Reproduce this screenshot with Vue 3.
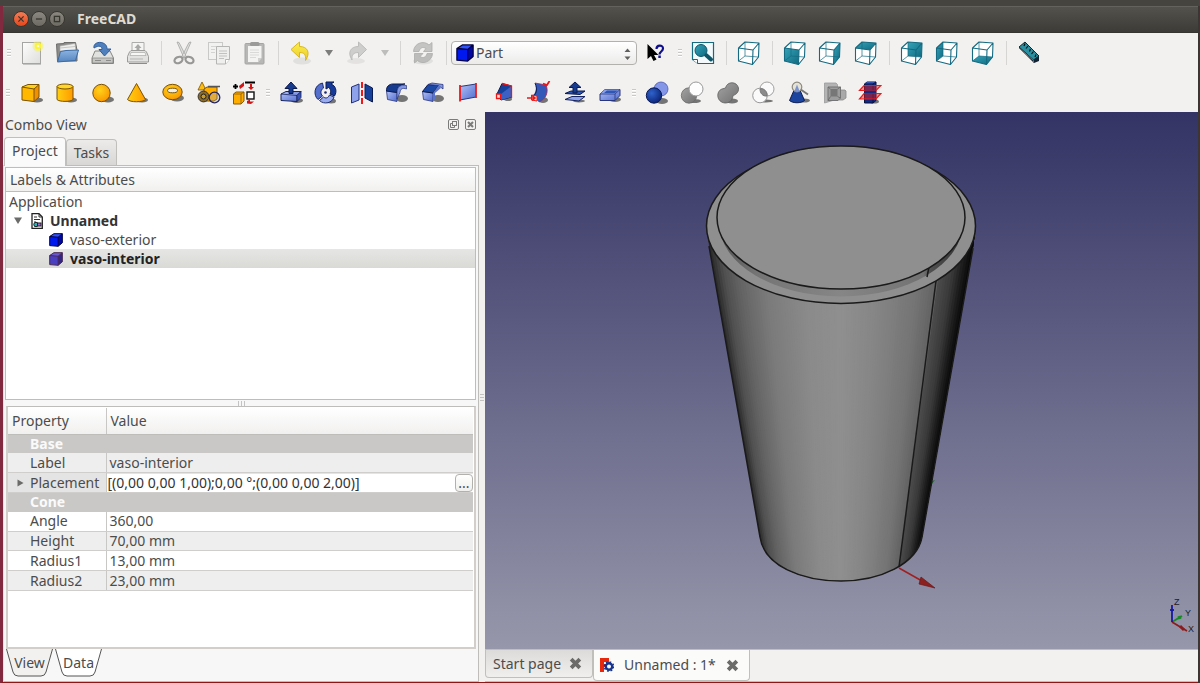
<script setup>
import { ref } from 'vue'

const teal = '#146a80'
const cubeFaces = {
  front: '1.5,7 16,9 15.5,23.5 1.5,20',
  right: '16,9 22,2 21.5,16 15.5,23.5',
  top: '1.5,7 8,1 22,2 16,9',
  rear: '8,1 22,2 21.5,16 8,15',
  left: '1.5,7 8,1 8,15 1.5,20',
  bottom: '1.5,20 15.5,23.5 21.5,16 8,15',
}
function cube(face) {
  const fill = face ? `<polygon points="${cubeFaces[face]}" fill="url(#gTeal)"/>` : ''
  return `<polygon points="1.5,7 8,1 22,2 21.5,16 15.5,23.5 1.5,20" fill="#fff"/>${fill}
  <g fill="none" stroke="${teal}" stroke-linejoin="round"><path d="M8 1V15L1.5 20M8 15L21.5 16" stroke-width=".7"/>
  <path d="M1.5 7L16 9L15.5 23.5L1.5 20ZM1.5 7L8 1L22 2L16 9M22 2L21.5 16L15.5 23.5" stroke-width="1.1"/></g>`
}
const shadow = (x, y, rx, ry) => `<ellipse cx="${x}" cy="${y}" rx="${rx}" ry="${ry}" fill="#222" opacity=".6"/>`
const blueCube = `<path d="M3 7L9 3L21 3L21 16L15 21L3 20Z" fill="#0018f0"/><path d="M15 8L21 3V16L15 21Z" fill="#0008a8"/><path d="M3 7L9 3H21L15 8Z" fill="#2f52ff"/><path d="M3 7L9 3H21V16L15 21L3 20ZM3 7L15 8V21M15 8L21 3" fill="none" stroke="#000040" stroke-width="1.4" stroke-linejoin="round"/>`

const icons = {
  blueCube,
  fadedCube: blueCube.replace('#0018f0', '#4a3fc0').replace('#0008a8', '#33268a').replace('#2f52ff', '#6a5ad0').replace('#000040', '#4a2a50'),
  new: `<rect x="2.500" y="1.500" width="18" height="21" fill="url(#gPaper)" stroke="#a5a5a3"/><path d="M3 23.500H21" stroke="#c4c4c2"/><circle cx="18" cy="5" r="5.500" fill="#f7f25a" opacity=".55"/><circle cx="18" cy="5" r="3.200" fill="#fbf335"/><circle cx="18" cy="5" r="1.300" fill="#fffde0"/>`,
  open: `<path d="M1.500 3L9 2.500V1.500H20.500L22 9V20H2.500Z" fill="#8c8c8a" stroke="#6e6e6c"/><path d="M5 5L20 2.500L21 10H5Z" fill="#efefee" stroke="#a8a8a6" stroke-width=".6"/><path d="M5 7L20 5.500" stroke="#c6c6c4"/><path d="M5.500 10.500L11 9.500L23.500 9L20.500 19.500L2.500 21Z" fill="url(#gFolder)" stroke="#3d6ba3"/>`,
  save: `<path d="M4 10H19L22.500 17V22.500H1V17Z" fill="#e1e1df" stroke="#858583"/><path d="M1.500 17H22V22H1.500Z" fill="#c5c5c3" stroke="#858583" stroke-width=".7"/><path d="M4 19.500H10M15 19.500H20" stroke="#8c8c8a" stroke-width="1.200"/><path d="M3 7C2 3 7 0 12 2C16 3.500 16 7 16 8H20L13.500 15L8 8.500H11C11 5 8 4 3 7Z" fill="#4f80bd" stroke="#2f5f9c"/>`,
  print: `<path d="M6 1.500H18V13H6Z" fill="#f5f5f4" stroke="#acacaa"/><path d="M12 3L15.500 7H13.500V11H10.500V7H8.500Z" fill="#a8a8a6"/><path d="M3.500 11L5 9.500H19L20.500 11L22.500 15.500V21H1.500V15.500Z" fill="#e2e2e0" stroke="#9b9b99"/><path d="M5 11.500H19L20 14.500H4Z" fill="#f7f7f6" stroke="#a9a9a7" stroke-width=".7"/><path d="M4 18H17" stroke="#b5b5b3"/><path d="M3 22.500H21" stroke="#8b8b89"/>`,
  cut: `<path d="M5 1L7 1.500L14.500 16L12 17ZM19 1L17 1.500L9.500 16L12 17Z" fill="#dededc" stroke="#a6a6a4" stroke-width=".8"/><ellipse cx="6.500" cy="19" rx="4.200" ry="3" fill="none" stroke="#979795" stroke-width="2.200" transform="rotate(-25 6.500 19)"/><ellipse cx="17.500" cy="19" rx="4.200" ry="3" fill="none" stroke="#979795" stroke-width="2.200" transform="rotate(25 17.500 19)"/>`,
  copy: `<rect x="1.500" y="1.500" width="14" height="17" fill="#f2f2f1" stroke="#c9c9c7"/><path d="M4 5.500H12M4 8.500H8M4 11.500H8" stroke="#d3d3d1"/><path d="M9.500 5.500H22.500V18.500L18.500 23H9.500Z" fill="#efefee" stroke="#b5b5b3"/><path d="M12 10H20M12 12.500H20M12 15H20M12 17.500H17" stroke="#c1c1bf"/><path d="M22.500 18.500H18.500V23" fill="#fff" stroke="#b5b5b3"/>`,
  paste: `<rect x="2" y="2.500" width="19" height="20.500" rx="1" fill="#b7b7b5" stroke="#a5a5a3"/><path d="M5 5H18.500V17L15 21H5Z" fill="#f3f3f2"/><path d="M7 9H16M7 11.500H16M7 14H16M7 16.500H13" stroke="#d9d9d7"/><path d="M15 21V17H18.500Z" fill="#cfcfcd"/><rect x="7" y="1" width="9.500" height="4" rx="1.500" fill="#9a9a98"/>`,
  undo: `<ellipse cx="13" cy="20" rx="9" ry="3.500" fill="#000" opacity=".07"/><path d="M2 8.500L10.500 1V5.500C19 5.500 21.500 12 16.500 19.500C17 13.500 15.500 11.500 10.500 11.500V16.500Z" fill="url(#gUndo)" stroke="#d9b81a" stroke-linejoin="round"/>`,
  redo: `<ellipse cx="11" cy="20" rx="9" ry="3" fill="#000" opacity=".06"/><path d="M21.500 8.500L13.500 1V5.500C5 5.500 2.500 12 7 19C6.500 13.500 8.500 11.500 13.500 11.500V16.500Z" fill="#cececc" stroke="#bcbcba" stroke-linejoin="round"/>`,
  refresh: `<ellipse cx="12" cy="20" rx="10" ry="3.500" fill="#000" opacity=".07"/><path d="M2.500 10.500C3 2 13 -1 18 4L21 1.500V10.500H12.500L15 7.500C12 5.500 9 6.500 8 10.500Z" fill="#c4c4c2" stroke="#acacaa" stroke-width=".8"/><path d="M21.500 12.500C21 21 11 24 6.500 19.500L3.500 22V12.500H12L9 15.500C12 17.500 15 16.500 16 12.500Z" fill="#bcbcba" stroke="#acacaa" stroke-width=".8"/>`,
  help: `<path d="M3.500 3V18L7 15L9.500 20L12.500 18.500L10 14H14.500Z" fill="#000"/><path d="M12.500 8C12.500 3.500 19 3.500 19 7.500C19 10.500 15.500 10.500 15.500 13.500" fill="none" stroke="#10108a" stroke-width="2.200"/><rect x="14.300" y="14.500" width="2.500" height="2.500" fill="#10108a"/>`,
  fit: `<path d="M1.500 1.500H22.500V22.500H7L1.500 18.500Z" fill="#f4fafb" stroke="${teal}" stroke-width="1.200"/><path d="M1.500 18.500H6.500V22.500" fill="#fff" stroke="${teal}"/><path d="M15 14L20 18.500" stroke="#0e5568" stroke-width="4" stroke-linecap="round"/><circle cx="10" cy="9.500" r="6" fill="url(#gTeal)" stroke="#0e5568"/>`,
  iso: cube(''), front: cube('front'), right: cube('right'), top: cube('top'), rear: cube('rear'), left: cube('left'), bottom: cube('bottom'),
  measure: `<path d="M2 7L17 22L22 20V15L8 2Z" fill="#123"/><path d="M2 6L8 1L22 15L16.500 19Z" fill="#2a8fa0" stroke="#0c2b33"/><path d="M8 2.500L7 5M11 5L9 7.500M13.500 8L12.500 10.500M16.500 10.500L14.500 13M19 13.500L18 16" stroke="#04151a" stroke-width="1.200"/><path d="M2 7L16.500 19.500V22" fill="none" stroke="#777"/>`,

  box: shadow(18, 19, 6, 2.5) + `<path d="M3 6L9 3.500H20V16L15 20.500L3 19Z" fill="#ffb700"/><path d="M15 8L20 3.500V16L15 20.500Z" fill="#f09000"/><path d="M3 6L9 3.500H20L15 8Z" fill="#ffd21a"/><path d="M3 6L9 3.500H20V16L15 20.500L3 19ZM3 6L15 8V20.500M15 8L20 3.500" fill="none" stroke="#7a5200" stroke-linejoin="round"/>`,
  cylinder: shadow(17, 19, 6, 2.5) + `<path d="M3 5.500V18.500C5 21 17 21 19 18.500V5.500Z" fill="url(#gGold)" stroke="#7a5200"/><ellipse cx="11" cy="5.500" rx="8" ry="2.500" fill="#ffd62a" stroke="#7a5200"/>`,
  sphere: shadow(18, 18.500, 6, 3) + `<circle cx="11.500" cy="12" r="8.700" fill="url(#gGoldR)" stroke="#7a5200"/>`,
  cone: shadow(17, 19, 6, 2.5) + `<path d="M11.500 2.500L2.500 18.500C5 21.500 18 21.500 20.500 18.500Z" fill="url(#gGold)" stroke="#7a5200" stroke-linejoin="round"/>`,
  torus: shadow(16, 17, 7, 3.500) + `<ellipse cx="11.500" cy="11" rx="9.700" ry="7.700" fill="url(#gGoldR)" stroke="#7a5200"/><ellipse cx="11.500" cy="9.500" rx="5" ry="2.300" fill="#f1f0ef" stroke="#7a5200"/>`,
  primitives: `<path d="M5 1L1 9H9Z" fill="#ffbd10" stroke="#7a5200" stroke-width=".8"/><path d="M7 8L10 6H20V18L17 20H7Z" fill="#ffae00" stroke="#7a5200"/><path d="M11 5.500H23" stroke="#555" stroke-width="1.500"/><circle cx="6.500" cy="15.500" r="5.400" fill="#8a6a24" stroke="#333"/><circle cx="6.500" cy="15.500" r="2.500" fill="#c99a28" stroke="#222"/><circle cx="17.500" cy="16.500" r="5.300" fill="#aaa" fill-opacity=".35" stroke="#26265c" stroke-width="1.300"/>`,
  builder: `<path d="M1 5.500H6M3.500 3V8M13 1.500H23" stroke="#000" stroke-width="1.800"/><path d="M7 5L12 1V5L8 8ZM18 3H20V6H22L19 9L16 6H18Z" fill="#d51414"/><path d="M1.500 13L4 11H12V20L9 23H1.500Z" fill="#ffac00" stroke="#8a5a00"/><path d="M1.500 13H9V23M9 13L12 11" fill="none" stroke="#8a5a00" stroke-width=".8"/><rect x="15" y="11" width="7" height="7" fill="#fff" stroke="#111" stroke-width="1.400"/><path d="M15 20L18 18.500V20.500H22L19 23L15 22.500Z" fill="#d51414"/>`,
  extrude: shadow(18, 19.500, 6, 2.5) + `<path d="M2 13L7 10.500H22L18 14.500V20.500L2 19.500Z" fill="url(#gBlue)" stroke="#16235c"/><path d="M2 13L18 14.500L22 10.500V16.500L18 20.500V14.500" fill="#3854b8" stroke="#16235c" stroke-width=".8"/><path d="M10 12.500V7.500H6L12 1L18 7.500H14V12.500Z" fill="#163a8e" stroke="#0a1a50"/>`,
  revolve: shadow(17, 20, 5, 2.5) + `<path d="M8.500 2C0 4 -1 14 4 18.500L8.500 15C6 12.500 6.500 9 9.500 7Z" fill="#5470cc" stroke="#1a2a70"/><path d="M5.500 19.500C10 24 18.500 22 20 16L15.500 14C14 17.500 11.500 17.500 9.500 16Z" fill="#9aabee" stroke="#1a2a70"/><path d="M20.500 15C23.500 10 21.500 4.500 17 3L20 1H12V8L14.500 6.500C17 8 17 11 16 13Z" fill="#163a9a" stroke="#0a1a50"/><circle cx="11.500" cy="11.500" r="1.300" fill="#1a2a70"/>`,
  mirror: `<path d="M1.500 6L9 3V19L1.500 22Z" fill="#8da2ea" stroke="#22307c"/><path d="M15 3L22.500 7V21L15 17Z" fill="#17409a" stroke="#0a1a50"/><path d="M12 1V23" stroke="#f01818" stroke-width="2" stroke-dasharray="6 2"/>`,
  fillet: shadow(17, 17.500, 6, 3.500) + `<path d="M1.500 10L12 11.500V20.500L2.500 18.500Z" fill="url(#gBlue)" stroke="#2a367c" stroke-width=".8"/><path d="M1.500 10C1 6 4 3 8 3H20C14 3.500 12 7 12 11.500Z" fill="#163a8e" stroke="#0a1a50"/><path d="M12 11.500C12 6 15 3.500 21.500 4.500V8C17 6.500 15.500 8 15 11.500L12 18Z" fill="#8398e4" stroke="#2a367c" stroke-width=".7"/>`,
  chamfer: shadow(17, 17.500, 6, 3.500) + `<path d="M1.500 10.500L12 12V20.500L2.500 18.500Z" fill="url(#gBlue)" stroke="#2a367c" stroke-width=".8"/><path d="M1.500 10.500L7 3.500L17.500 4.500L12 12Z" fill="#1a48a4" stroke="#0a1a50"/><path d="M7 3.500L11 2L22 3.500V8L17.500 4.500Z" fill="#8398e4" stroke="#2a367c" stroke-width=".8"/><path d="M12 12L17.500 4.500L20 7L14 12V18L12 20.500Z" fill="#5a74cc"/>`,
  ruled: `<path d="M4 5.500L20 3V16L4 19Z" fill="url(#gBlue)"/><path d="M4 5.500L20 3M4 19L20 16" stroke="#2a367c"/><path d="M4 4V20.500M20 2V17" stroke="#f01818" stroke-width="1.800"/>`,
  loft: shadow(16, 18, 4, 2) + `<path d="M5 13L10 2.500L19.500 5V16L9 19Z" fill="#17409a" stroke="#0a1a50"/><path d="M9 13L19.500 5V16L9 19Z" fill="#3c60c4"/><path d="M10 2.500L19.500 5V17" fill="none" stroke="#e81818" stroke-width="1.300"/><path d="M4.500 13H8.500V17.500H4.500Z" fill="#f6dede" stroke="#e81818" stroke-width="1.300"/>`,
  sweep: shadow(16, 19, 5, 3) + `<path d="M8 2L19 4C22 11 19 18 12 21L5 15C9 12 10 7 8 2Z" fill="#3358b8"/><path d="M8 2C11 9 9 14 5 16" fill="none" stroke="#0a1a50"/><path d="M8 2L19 4C22 11 19 18 12 21" fill="none" stroke="#b02050" stroke-width=".8"/><path d="M18 5L20 4L22.500 0M16 2.500L20 4" fill="none" stroke="#e81818" stroke-width="1.800"/><path d="M4.500 14L10 15V20L4.500 19Z" fill="#fbdada" stroke="#e81818"/><path d="M0 17H7M5 14.500L8 17L5 19.500" fill="none" stroke="#e81818" stroke-width="1.600"/>`,
  offset: shadow(16, 20, 6, 1.500) + `<path d="M2 18.500L9 15.500H22L16 20Z" fill="#8da2ea" stroke="#16235c"/><path d="M2 12.500L8 10H22L17 13.500Z" fill="#2c55b5" stroke="#0a1a50"/><path d="M10 12V6.500H6L12 1L18 6.500H14V12Z" fill="#163a8e" stroke="#0a1a50"/>`,
  thickness: shadow(17, 18.500, 6, 2.500) + `<path d="M2 13L7 8.500H22V14.500L17 19.500H2Z" fill="url(#gBlue)" stroke="#2a367c"/><path d="M2 13L7 8.500H22L17 13Z" fill="#8ba0ea"/><path d="M2 13H17L22 8.500M17 13V19.500" fill="none" stroke="#2a367c" stroke-width=".8"/><path d="M6 12L9 9.500H20L17 12Z" fill="#2f56b4"/>`,
  boolean: shadow(17, 20, 6, 3) + `<circle cx="16" cy="8" r="7" fill="#8496e8" stroke="#4a58b0" stroke-width=".8"/><circle cx="9" cy="14.500" r="7.700" fill="url(#gBall)" stroke="#081a5a"/>`,
  cutBool: shadow(14, 20, 7, 2) + `<circle cx="9" cy="14.500" r="7.700" fill="url(#gGray)" stroke="#686868" stroke-width=".8"/><circle cx="16" cy="8" r="7" fill="#fdfdfd" stroke="#999"/>`,
  union: shadow(16, 20, 6, 2.5) + `<path d="M9.500 7C11 0 21 0 22.500 7C23 12 19 14 17 14.500C16.500 20 13 22 9 22C0 21 0 10 6 8Z" fill="url(#gGray)" stroke="#5e5e5e" stroke-width=".8"/>`,
  common: shadow(15, 20, 7, 1.500) + `<circle cx="16" cy="8" r="7" fill="#fafafa" stroke="#a0a0a0"/><circle cx="9" cy="14.500" r="7.300" fill="#fafafa" stroke="#989898"/><path d="M9 8C12 7 16.500 10 16 15C11.500 15.500 9 12 9 8Z" fill="#8b8b8b" stroke="#777"/>`,
  check: shadow(17, 19.500, 6, 2) + `<path d="M8 7L2.500 19.500C6 22.500 14 22.500 17.500 19.500L12 7Z" fill="#1b459f" stroke="#0a1a50"/><path d="M13 8L21 13.500" stroke="#777" stroke-width="2"/><circle cx="10" cy="6" r="4.800" fill="#e5e2d8" stroke="#8d897d" stroke-width="1.200"/><path d="M7.500 10L10 3.500L12.500 10Z" fill="#7c95cf"/>`,
  compound: `<path d="M1.500 2H13L14.500 3.500V20L13 18.500L1.500 22Z" fill="#b4b4b4" stroke="#9b9b9b" stroke-width=".8"/><path d="M13 9H22L23 10V17L20 19H13Z" fill="#a9a9a9" stroke="#8b8b8b" stroke-width=".8"/><path d="M5 6H17.500V17L15 19.500H5Z" fill="#9d9d9d" stroke="#757575"/><path d="M7.500 8H14.500V15.500H7.500Z" fill="#777"/><path d="M5 6L7.500 8M17.500 6L14.500 8M5 19.500L7.500 15.500M17.500 17L14.500 15.500" stroke="#666" stroke-width=".8"/>`,
  section: shadow(16, 20.500, 5, 2) + `<path d="M6.500 3L9 1H18V19.500L15 22H6.500Z" fill="#142a80" stroke="#08103c"/><path d="M6.500 3L9 1H18L15 3.500Z" fill="#3656b4"/><path d="M6.500 3H15V22M15 3L18 1" stroke="#08103c" fill="none"/><g fill="#f02020" fill-opacity=".45" stroke="#f01818" stroke-width="1.200"><path d="M1.500 9.500L6 4.500H23L18 9.500Z"/><path d="M1.500 18L6 12.500H23L18 18Z"/></g><path d="M6.500 9.500V12.500H18V9.500Z" fill="#142a80"/>`,
}

const fileTools = [['new', 'New'], ['open', 'Open'], ['save', 'Save'], ['print', 'Print']]
const editTools = [['cut', 'Cut'], ['copy', 'Copy'], ['paste', 'Paste']]
const viewA = [['front', 'Front view'], ['right', 'Right view'], ['top', 'Top view']]
const viewB = [['rear', 'Rear view'], ['left', 'Left view'], ['bottom', 'Bottom view']]
const solids = [['box', 'Box'], ['cylinder', 'Cylinder'], ['sphere', 'Sphere'], ['cone', 'Cone'], ['torus', 'Torus'], ['primitives', 'Create primitives'], ['builder', 'Shape builder']]
const partTools = [['extrude', 'Extrude'], ['revolve', 'Revolve'], ['mirror', 'Mirror'], ['fillet', 'Fillet'], ['chamfer', 'Chamfer'], ['ruled', 'Ruled surface'], ['loft', 'Loft'], ['sweep', 'Sweep'], ['offset', 'Offset'], ['thickness', 'Thickness']]
const booleans = [['boolean', 'Boolean'], ['cutBool', 'Cut shapes'], ['union', 'Union'], ['common', 'Intersection'], ['check', 'Check geometry'], ['compound', 'Compound'], ['section', 'Cross-sections']]

const properties = [
  { group: 'Base' },
  { name: 'Label', value: 'vaso-interior', alt: true },
  { name: 'Placement', edit: true, alt: true },
  { group: 'Cone' },
  { name: 'Angle', value: '360,00' },
  { name: 'Height', value: '70,00 mm', alt: true },
  { name: 'Radius1', value: '13,00 mm' },
  { name: 'Radius2', value: '23,00 mm', alt: true },
]
const placement = ref('[(0,00 0,00 1,00);0,00 °;(0,00 0,00 2,00)]')
const workbench = ref('Part')

/* The tapered wall is shaded with strips that follow the slope of the cone. */
const stops = [[0, 40], [0.04, 78], [0.1, 100], [0.2, 122], [0.35, 138], [0.5, 143], [0.65, 133], [0.8, 116], [0.878, 98], [0.88, 76], [0.93, 58], [0.965, 30], [1, 6]]
function shade(t) {
  for (let i = 1; i < stops.length; i++) {
    if (t <= stops[i][0]) {
      const [a, ca] = stops[i - 1]
      const [b, cb] = stops[i]
      return Math.round(ca + ((cb - ca) * (t - a)) / (b - a))
    }
  }
  return 6
}
const N = 100
const strips = Array.from({ length: N }, (_, i) => {
  const t = i / N
  const c = shade((i + 0.5) / N)
  const x1 = 705 + 273 * t
  const x2 = 768 + 146 * t
  return { points: `${x1},225 980,225 916,585 ${x2},585`, fill: `rgb(${c},${c},${c})` }
})
</script>

<template>
  <div class="desktop">
    <svg class="defs" width="0" height="0" aria-hidden="true">
      <defs>
        <linearGradient id="gTeal" x1="0" y1="0" x2="1" y2="1"><stop offset="0" stop-color="#36a3b8" /><stop offset="1" stop-color="#0f6a80" /></linearGradient>
        <linearGradient id="gPaper" x1="0" y1="0" x2="1" y2="1"><stop offset="0" stop-color="#fdfdfd" /><stop offset="1" stop-color="#dededc" /></linearGradient>
        <linearGradient id="gFolder" x1="0" y1="0" x2="0" y2="1"><stop offset="0" stop-color="#8db4df" /><stop offset="1" stop-color="#5585c0" /></linearGradient>
        <linearGradient id="gUndo" x1="0" y1="0" x2="0" y2="1"><stop offset="0" stop-color="#fbef4a" /><stop offset="1" stop-color="#eccb30" /></linearGradient>
        <linearGradient id="gGold" x1="0" y1="0" x2="1" y2="0"><stop offset="0" stop-color="#ffcf10" /><stop offset="1" stop-color="#ff9a00" /></linearGradient>
        <radialGradient id="gGoldR" cx=".4" cy=".35" r=".7"><stop offset="0" stop-color="#ffd21a" /><stop offset="1" stop-color="#f99500" /></radialGradient>
        <linearGradient id="gBlue" x1="0" y1="0" x2="1" y2="1"><stop offset="0" stop-color="#b3c2f5" /><stop offset="1" stop-color="#4f6bd0" /></linearGradient>
        <radialGradient id="gBall" cx=".35" cy=".35" r=".7"><stop offset="0" stop-color="#2e62cc" /><stop offset="1" stop-color="#0b2476" /></radialGradient>
        <linearGradient id="gGray" x1="0" y1="0" x2="1" y2="1"><stop offset="0" stop-color="#a4a4a4" /><stop offset="1" stop-color="#6f6f6f" /></linearGradient>
      </defs>
    </svg>

    <div class="window">
      <header class="titlebar">
        <button class="cap close" aria-label="Close"><svg viewBox="0 0 16 16"><path d="M5 5L11 11M11 5L5 11" /></svg></button>
        <button class="cap" aria-label="Minimize"><svg viewBox="0 0 16 16"><path d="M4.500 8H11.500" /></svg></button>
        <button class="cap" aria-label="Maximize"><svg viewBox="0 0 16 16"><rect x="5" y="5" width="6" height="6" /></svg></button>
        <h1>FreeCAD</h1>
      </header>

      <div class="toolbar first">
        <i class="grip"></i>
        <div class="group four"><button v-for="[k, l] in fileTools" :key="k" class="tool" :aria-label="l"><svg viewBox="0 0 24 24" v-html="icons[k]"></svg></button></div>
        <i class="sep"></i>
        <div class="group three"><button v-for="[k, l] in editTools" :key="k" class="tool" :aria-label="l"><svg viewBox="0 0 24 24" v-html="icons[k]"></svg></button></div>
        <i class="sep"></i>
        <button class="tool" aria-label="Undo"><svg viewBox="0 0 24 24" v-html="icons.undo"></svg></button>
        <button class="drop" aria-label="Undo list"><svg viewBox="0 0 10 6"><path d="M1 0H9L5 6Z" fill="#7d7d7b" /></svg></button>
        <button class="tool" aria-label="Redo"><svg viewBox="0 0 24 24" v-html="icons.redo"></svg></button>
        <button class="drop" aria-label="Redo list"><svg viewBox="0 0 10 6"><path d="M1 0H9L5 6Z" fill="#bdbdbb" /></svg></button>
        <i class="sep"></i>
        <button class="tool" aria-label="Refresh"><svg viewBox="0 0 24 24" v-html="icons.refresh"></svg></button>
        <i class="sep"></i>
        <div class="combo">
          <svg class="combo-icon" viewBox="2 2 20 20" v-html="icons.blueCube"></svg>
          <select v-model="workbench" aria-label="Workbench"><option>Part</option></select>
          <svg class="combo-arrows" viewBox="0 0 7 12"><path d="M0.500 4L3.500 0.500L6.500 4ZM0.500 8.500L3.500 12L6.500 8.500Z" fill="#5f5f5d" /></svg>
        </div>
        <button class="tool" aria-label="What's this?"><svg viewBox="0 0 24 24" v-html="icons.help"></svg></button>
        <i class="grip"></i>
        <button class="tool" aria-label="Fit all"><svg viewBox="0 0 24 24" v-html="icons.fit"></svg></button>
        <i class="sep"></i>
        <button class="tool" aria-label="Axonometric view"><svg viewBox="0 0 24 24" v-html="icons.iso"></svg></button>
        <i class="sep"></i>
        <div class="group three"><button v-for="[k, l] in viewA" :key="k" class="tool" :aria-label="l"><svg viewBox="0 0 24 24" v-html="icons[k]"></svg></button></div>
        <i class="sep"></i>
        <div class="group three"><button v-for="[k, l] in viewB" :key="k" class="tool" :aria-label="l"><svg viewBox="0 0 24 24" v-html="icons[k]"></svg></button></div>
        <i class="sep"></i>
        <button class="tool" aria-label="Measure distance"><svg viewBox="0 0 24 24" v-html="icons.measure"></svg></button>
      </div>

      <div class="toolbar second">
        <i class="grip"></i>
        <div class="group seven"><button v-for="[k, l] in solids" :key="k" class="tool" :aria-label="l"><svg viewBox="0 0 24 24" v-html="icons[k]"></svg></button></div>
        <i class="grip"></i>
        <div class="group ten"><button v-for="[k, l] in partTools" :key="k" class="tool" :aria-label="l"><svg viewBox="0 0 24 24" v-html="icons[k]"></svg></button></div>
        <i class="grip"></i>
        <div class="group seven"><button v-for="[k, l] in booleans" :key="k" class="tool" :aria-label="l"><svg viewBox="0 0 24 24" v-html="icons[k]"></svg></button></div>
      </div>

      <main class="body">
        <aside class="dock">
          <div class="dock-title">
            <h2>Combo View</h2>
            <button class="dock-btn" aria-label="Float"><svg viewBox="0 0 11 11"><rect x=".5" y=".5" width="10" height="10" rx="1.500" /><rect x="4.500" y="2.500" width="4" height="4" /><path d="M4.500 4.500H2.500V8.500H6.500V6.500" /></svg></button>
            <button class="dock-btn" aria-label="Close panel"><svg viewBox="0 0 11 11"><rect x=".5" y=".5" width="10" height="10" rx="1.500" /><path d="M3 3L8 8M8 3L3 8" stroke-width="2" /></svg></button>
          </div>
          <div class="tabs" role="tablist">
            <button class="tab active" role="tab" aria-selected="true">Project</button>
            <button class="tab" role="tab" aria-selected="false">Tasks</button>
          </div>
          <div class="pane">
            <section class="tree">
              <div class="head">Labels &amp; Attributes</div>
              <div role="tree" aria-label="Labels &amp; Attributes">
                <div class="node" role="treeitem">Application</div>
                <div class="node doc" role="treeitem" aria-expanded="true">
                  <svg class="arrow" viewBox="0 0 8 7"><path d="M0 .5H8L4 7Z" fill="#6b6b69" /></svg>
                  <svg class="doc-icon" viewBox="0 0 12 16"><path d="M1 .7H8L11.300 4V15.300H1Z" fill="#fff" stroke="#222" stroke-width="1.300" /><path d="M8 1V4H11M3 4H6M3 6.500H9M3 9H5M3 13H5" fill="none" stroke="#333" /><circle cx="5" cy="11.500" r="2.200" fill="#27b4b8" stroke="#222" /><rect x="6.500" y="10" width="3.500" height="3" fill="#a06ad0" stroke="#222" /></svg>
                  <b>Unnamed</b>
                </div>
                <div class="node leaf" role="treeitem"><svg viewBox="2 2 20 20" v-html="icons.blueCube"></svg><span>vaso-exterior</span></div>
                <div class="node leaf selected" role="treeitem" aria-selected="true"><svg viewBox="2 2 20 20" v-html="icons.fadedCube"></svg><b>vaso-interior</b></div>
              </div>
            </section>
            <div class="hsplit"><i></i><i></i><i></i></div>
            <section class="props">
              <table>
                <thead><tr><th class="c1" scope="col">Property</th><th scope="col">Value</th></tr></thead>
                <tbody>
                  <template v-for="p in properties" :key="p.group || p.name">
                    <tr v-if="p.group" class="grp"><th colspan="2" scope="rowgroup">{{ p.group }}</th></tr>
                    <tr v-else :class="{ alt: p.alt, edit: p.edit }">
                      <td class="c1"><div class="name"><svg v-if="p.edit" class="expander" viewBox="0 0 7 8"><path d="M.5 .5L6.500 4L.5 7.500Z" fill="#6b6b69" /></svg>{{ p.name }}</div></td>
                      <td>
                        <div v-if="p.edit" class="editor"><input v-model="placement" aria-label="Placement" /><button aria-label="Edit placement">...</button></div>
                        <div v-else class="val">{{ p.value }}</div>
                      </td>
                    </tr>
                  </template>
                </tbody>
              </table>
            </section>
            <div class="sheet-tabs" role="tablist">
              <button role="tab" aria-selected="false"><svg viewBox="0 0 47 28" preserveAspectRatio="none"><path d="M.5 0L7 23Q8 27 12 27H35Q39 27 40 23L46.500 0" fill="#f2f1f0" stroke="#555" /></svg><span>View</span></button>
              <button role="tab" aria-selected="true"><svg viewBox="0 0 47 28" preserveAspectRatio="none"><path d="M.5 0L7 23Q8 27 12 27H35Q39 27 40 23L46.500 0" fill="#fff" stroke="#555" /></svg><span>Data</span></button>
            </div>
          </div>
        </aside>
        <div class="vsplit"><i></i><i></i><i></i></div>

        <section class="mdi">
          <div class="view3d">
            <svg viewBox="485 112 713 537" role="img" aria-label="3D view">
              <defs>
                <clipPath id="wall"><path d="M706 225L709 246L760 537C764 566 802 581 841 581C880 581 917 564 922 537L973 248L976 225Z" /></clipPath>
                <linearGradient id="gLip" x1="720" y1="0" x2="962" y2="0" gradientUnits="userSpaceOnUse"><stop offset="0" stop-color="#555" /><stop offset=".15" stop-color="#747474" /><stop offset=".5" stop-color="#868686" /><stop offset=".84" stop-color="#727272" /><stop offset=".87" stop-color="#505050" /><stop offset="1" stop-color="#333" /></linearGradient>
              </defs>
              <path d="M929 482L935 480L931 485Z" fill="#1d7030" />
              <g clip-path="url(#wall)"><polygon v-for="(s, i) in strips" :key="i" :points="s.points" :fill="s.fill" /></g>
              <g fill="none" stroke="#1a1a1a" stroke-width="1.500">
                <path d="M709 246L760 537C764 566 802 581 841 581C880 581 917 564 922 537L973 248" />
                <path d="M936 281L899 567" />
                <ellipse cx="841" cy="226" rx="134.500" ry="77.500" fill="#8f8f8f" />
                <ellipse cx="841" cy="224" rx="121.500" ry="72.500" fill="url(#gLip)" stroke="none" />
                <path d="M929 267L927 277" />
                <ellipse cx="841" cy="217.500" rx="124" ry="71.500" fill="#8f8f8f" />
              </g>
              <path d="M899 568L922 581" stroke="#a02020" stroke-width="1.500" />
              <path d="M921 577L935 588L919 584Z" fill="#8c1f1f" stroke="#6a1717" stroke-width=".7" />
              <g fill="none" stroke-width="1.800">
                <path d="M1172 622L1182 616" stroke="#168a24" /><path d="M1172 622L1187 631" stroke="#8c1c1c" /><path d="M1172 622V605" stroke="#1818a0" />
                <path d="M1180 626L1184 630" stroke-width="3" stroke="#8c1c1c" /><path d="M1178 618L1181 617" stroke-width="3" stroke="#168a24" /><path d="M1170 610H1174" stroke="#1818a0" />
              </g>
              <g class="axis"><text x="1174" y="605">Z</text><text x="1185" y="616">Y</text><text x="1188" y="632">X</text></g>
            </svg>
          </div>
          <div class="mdi-tabs" role="tablist">
            <div class="mdi-tab"><button class="lbl" role="tab" aria-selected="false">Start page</button><button class="x" aria-label="Close Start page"><svg viewBox="0 0 12 12"><path d="M2 2L10 10M10 2L2 10" /></svg></button></div>
            <div class="mdi-tab current">
              <svg class="logo" viewBox="0 0 14 14"><path d="M0 0H9V4H4V6H7V9H4V14H0Z" fill="#e8280c" /><circle cx="9" cy="8.500" r="3.200" fill="none" stroke="#17348c" stroke-width="2.400" /><circle cx="9" cy="8.500" r="4.600" fill="none" stroke="#17348c" stroke-width="1.500" stroke-dasharray="1.800 1.800" /></svg>
              <button class="lbl" role="tab" aria-selected="true">Unnamed : 1*</button><button class="x" aria-label="Close Unnamed"><svg viewBox="0 0 12 12"><path d="M2 2L10 10M10 2L2 10" /></svg></button>
            </div>
          </div>
        </section>
      </main>
    </div>
  </div>
</template>

<style>
body { margin: 0; background: #3f3e39; }
</style>

<style scoped>
* { box-sizing: border-box; }
.desktop {
  min-height: 100vh; display: flex; flex-direction: column; padding: 6px 2px 0 0;
  background: linear-gradient(#45443f, #45443f) top / 100% 6px no-repeat, #3a3633;
  font: 14px/18px "Noto Sans", "Open Sans", sans-serif; color: #4c4c4c;
}
.defs { position: absolute; }
svg { display: block; }
button { font: inherit; color: inherit; padding: 0; margin: 0; border: 0; background: none; }
h1, h2 { margin: 0; font-size: 14px; }
.window {
  flex: 1; display: flex; flex-direction: column; background: #f2f1f0;
  border-left: 3px solid #812a3f; border-bottom: 1px solid #8f1616;
}
.titlebar {
  height: 27px; display: flex; align-items: center; gap: 2px; padding: 0 0 1px 10px;
  background: linear-gradient(#53524c, #3c3b37); border-top: 1px solid #63625c; border-bottom: 1px solid #363531;
}
.titlebar h1 { margin-left: 10px; font-size: 13px; color: #dfdbd2; }
.cap { width: 16px; height: 16px; border-radius: 50%; background: linear-gradient(#8a8881, #6c6a63); border: 1px solid #37362f; }
.cap svg { width: 14px; height: 14px; fill: none; stroke: #37362f; stroke-width: 1.500; }
.cap.close { background: linear-gradient(#f57b54, #e5481c); }
.titlebar h1 { font-size: 14px; }

.toolbar { height: 39px; display: flex; align-items: center; }
.toolbar.first { height: 40px; }
.grip { flex: none; width: 11px; height: 8px; background: repeating-linear-gradient(#c9c8c6 0 1px, #fff 1px 2px, transparent 2px 3px) center / 4px 8px no-repeat; }
.second .grip:first-child { width: 10px; }
.sep { flex: none; width: 10px; height: 24px; background: linear-gradient(#d6d5d3, #d6d5d3) center / 1px 100% no-repeat; }
.group { flex: none; display: grid; grid-auto-flow: column; grid-auto-columns: 1fr; }
.group.three { width: 107px; }
.group.four { width: 142px; }
.group.seven { width: 249px; }
.group.ten { width: 355px; }
.tool { flex: none; min-width: 35px; height: 34px; display: flex; align-items: center; justify-content: center; }
.toolbar > .tool { width: 36px; }
.tool svg { width: 24px; height: 24px; }
.drop { width: 20px; height: 34px; display: flex; align-items: center; justify-content: center; }
.drop svg { width: 10px; height: 6px; }
.combo { position: relative; width: 186px; height: 24px; margin-right: 1px; }
.combo select {
  width: 100%; height: 24px; appearance: none; padding: 0 20px 1px 24px; font: inherit; color: inherit;
  border: 1px solid #b3b1ae; border-radius: 4px; background: linear-gradient(#fff, #ecebea);
}
.combo-icon { position: absolute; left: 5px; top: 3px; width: 18px; height: 18px; pointer-events: none; }
.combo-arrows { position: absolute; right: 6px; top: 7px; width: 7px; height: 12px; pointer-events: none; }

.body { flex: 1; display: flex; min-height: 0; }
.dock { flex: none; width: 476px; display: flex; flex-direction: column; }
.dock-title { height: 25px; display: flex; align-items: center; gap: 6px; padding: 0 3px 0 2px; }
.dock-title h2 { flex: 1; font-weight: 400; }
.dock-btn svg { width: 11px; height: 11px; fill: none; stroke: #7b7b79; }
.tabs { height: 28px; display: flex; align-items: flex-end; padding-left: 1px; }
.tab { height: 26px; padding: 0 7px; border: 1px solid #c1bfbc; border-bottom: 0; border-radius: 4px 4px 0 0; background: linear-gradient(#ecebea, #d9d7d5); }
.tab.active { height: 29px; margin-bottom: -1px; padding-bottom: 2px; position: relative; background: #fafafa; }
.pane { flex: 1; display: flex; flex-direction: column; padding: 2px 2px 3px 2px; background: #f7f7f7; border: 1px solid #bfbdba; border-left-color: #e4e3e1; }
.tree { height: 233px; background: #fff; border: 1px solid #bfbdba; margin: -1px 0 0 -1px; }
.head { height: 24px; line-height: 24px; padding-left: 4px; background: linear-gradient(#fff, #f1f0ef); border-bottom: 1px solid #bfbdba; }
.node { height: 19px; line-height: 19px; display: flex; align-items: center; padding-left: 3px; }
.node b { color: #333; }
.node.doc { padding-left: 8px; }
.arrow { width: 8px; height: 7px; }
.doc-icon { width: 12px; height: 16px; margin: 0 7px 0 9px; }
.node.leaf { padding-left: 43px; gap: 7px; }
.node.leaf svg { width: 14px; height: 14px; }
.selected { background: linear-gradient(#e6e6e4, #d9d9d6); }
.selected b { color: #222; }
.hsplit, .vsplit { display: flex; align-items: center; justify-content: center; gap: 2px; }
.hsplit { height: 6px; }
.hsplit i { width: 1px; height: 5px; background: #c4c3c1; }
.vsplit { flex: none; width: 6px; flex-direction: column; }
.vsplit i { width: 4px; height: 1px; background: #c4c3c1; }
.props { flex: 1; background: #fff; border: 2px solid #d2cfcb; border-top: 1px solid #bfbdba; padding: 1px 1px 0 0; }
table { width: 100%; height: 183px; border-collapse: collapse; table-layout: fixed; }
th, td { padding: 0; font-weight: 400; text-align: left; line-height: 18px; }
thead tr { height: 26px; background: linear-gradient(#fff, #f1f0ef); }
thead th { padding-left: 4px; border-bottom: 1px solid #bfbdba; }
.c1 { width: 98px; border-right: 1px solid #c8c7c5; }
.grp { background: #c9c8c6; }
.grp th { padding-left: 22px; font-weight: 700; color: #fafafa; }
tbody td { border-bottom: 1px solid #cfcecc; }
.name { display: flex; align-items: center; padding-left: 22px; position: relative; }
.expander { position: absolute; left: 9px; width: 7px; height: 8px; }
.val { padding-left: 3px; }
.alt { background: #eee; }
.edit { background: #e4e4e4; }
.editor { display: flex; background: #fff; }
.editor input { flex: 1; min-width: 0; height: 18px; padding: 0 1px; border: 0; outline: 0; font: inherit; color: #333; background: #fff; }
.editor button { width: 18px; height: 18px; line-height: 14px; border: 1px solid #b3b1ae; border-radius: 4px; background: linear-gradient(#fff, #f0efee); }
.sheet-tabs { height: 29px; display: flex; gap: 2px; }
.sheet-tabs button { position: relative; width: 47px; height: 28px; }
.sheet-tabs svg { position: absolute; inset: 0; width: 100%; height: 100%; }
.sheet-tabs span { position: relative; }

.mdi { flex: 1; min-width: 0; display: flex; flex-direction: column; }
.view3d { position: relative; flex: 1; background: linear-gradient(#333365, #9797ab); }
.view3d svg { position: absolute; inset: 0; width: 100%; height: 100%; }
.axis { font: 9px "Liberation Sans", sans-serif; fill: #1c1c24; }
.mdi-tabs { height: 33px; display: flex; align-items: flex-start; border-top: 1px solid #c1bfbc; border-bottom: 1px solid #c1bfbc; }
.mdi-tab { height: 28px; display: flex; align-items: center; gap: 8px; padding: 0 10px 0 7px; border: 1px solid #c1bfbc; border-top: 0; border-radius: 0 0 4px 4px; background: linear-gradient(#dddbd9, #f0efee); }
.mdi-tab.current { height: 31px; background: #fbfbfa; padding-left: 6px; gap: 10px; }
.logo { width: 14px; height: 14px; }
.x svg { width: 13px; height: 13px; fill: none; stroke: #6b6b69; stroke-width: 3.500; }
</style>
